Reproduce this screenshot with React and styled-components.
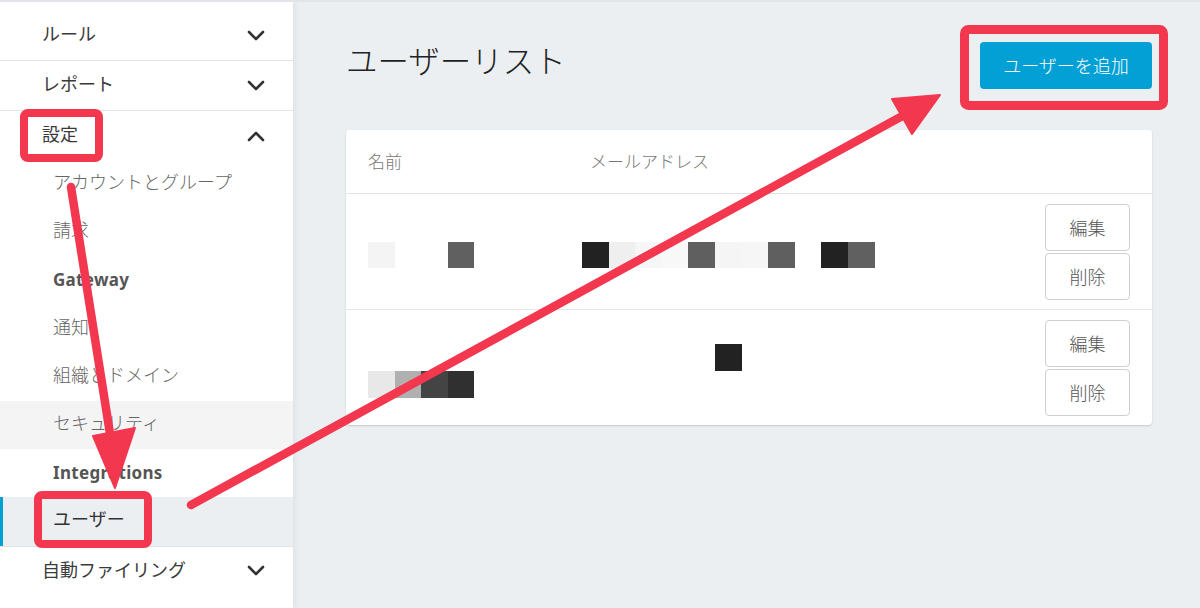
import React from "react";
import styled, { createGlobalStyle } from "styled-components";

const GlobalStyle = createGlobalStyle`
    html, body {
        margin: 0;
        padding: 0;
        font-family: "Noto Sans", "Noto Sans CJK JP", sans-serif;
    }
    * {
        box-sizing: border-box;
    }
`;

const RED = "#f2374e";
const BLUE = "#03a0d6";

const navGroups = [
    { label: "ルール", open: false, divided: true },
    { label: "レポート", open: false, divided: true },
    {
        label: "設定",
        open: true,
        divided: true,
        items: [
            { label: "アカウントとグループ" },
            { label: "請求" },
            { label: "Gateway", bold: true },
            { label: "通知" },
            { label: "組織とドメイン" },
            { label: "セキュリティ", hover: true },
            { label: "Integrations", bold: true },
            { label: "ユーザー", active: true },
        ],
    },
    { label: "自動ファイリング", open: false },
];

// ぼかし済みの名前/メール (モザイク)
const W = "transparent";
const users = [
    {
        name: [["#f4f4f4", W, W, "#606060"]],
        mail: [
            [
                "#222222",
                "#efefef",
                "#f6f6f6",
                "#f8f8f8",
                "#5f5f5f",
                "#f5f5f5",
                "#f6f6f6",
                "#5f5f5f",
                W,
                "#222222",
                "#606060",
            ],
        ],
    },
    {
        name: [
            [W, W, W, W],
            ["#e8e8e8", "#b0b0b0", "#444444", "#303030"],
        ],
        mail: [[W, W, W, W, W, "#222222"], [W]],
    },
];

const Chevron = ({ up }) => (
    <svg width="18" height="12" viewBox="0 0 18 12">
        <polyline
            points={up ? "2,10 9,3 16,10" : "2,2 9,9 16,2"}
            fill="none"
            stroke="#333"
            strokeWidth="2.6"
            strokeLinecap="round"
            strokeLinejoin="round"
        />
    </svg>
);

const Mosaic = ({ lines, shift }) => (
    <MosaicBox $shift={shift}>
        {lines.map((line, i) => (
            <MosaicLine key={i}>
                {line.map((c, j) => (
                    <MosaicCell key={j} style={{ background: c }} />
                ))}
            </MosaicLine>
        ))}
    </MosaicBox>
);

// 注釈 (赤枠と矢印)
const Annotations = () => (
    <Overlay viewBox="0 0 1200 608">
        <g fill="none" stroke={RED} strokeWidth="8">
            <rect x="24" y="113" width="75" height="45" rx="4" />
            <rect x="38" y="495" width="110" height="49" rx="4" />
            <rect x="964.5" y="29.5" width="199" height="76" rx="4" strokeWidth="9" />
        </g>
        <g stroke={RED} strokeWidth="8.5" strokeLinecap="round">
            <line x1="71" y1="187" x2="111" y2="440" />
            <line x1="191" y1="505" x2="906" y2="114" />
        </g>
        <g fill={RED} stroke={RED} strokeWidth="2" strokeLinejoin="round">
            <polygon points="93,436 135,428 115,488" />
            <polygon points="892,99 912,134 940,95" />
        </g>
    </Overlay>
);

const App = () => {
    return (
        <React.Fragment>
            <GlobalStyle />
            <Page>
                <Sidebar>
                    {navGroups.map(group => (
                        <NavGroup key={group.label} $divided={group.divided}>
                            <NavHeader>
                                <span>{group.label}</span>
                                <Chevron up={group.open} />
                            </NavHeader>
                            {group.items &&
                                group.items.map(item => (
                                    <SubItem
                                        key={item.label}
                                        $bold={item.bold}
                                        $hover={item.hover}
                                        $active={item.active}
                                    >
                                        {item.label}
                                    </SubItem>
                                ))}
                        </NavGroup>
                    ))}
                </Sidebar>
                <Main>
                    <Header>
                        <Title>ユーザーリスト</Title>
                        <PrimaryButton>ユーザーを追加</PrimaryButton>
                    </Header>
                    <Card>
                        <HeadRow>
                            <HeadCell>名前</HeadCell>
                            <HeadCell>メールアドレス</HeadCell>
                            <span />
                        </HeadRow>
                        {users.map((u, i) => (
                            <Row key={i} $last={i === users.length - 1}>
                                <Cell>
                                    <Mosaic lines={u.name} />
                                </Cell>
                                <Cell>
                                    <Mosaic lines={u.mail} shift={-8} />
                                </Cell>
                                <Actions>
                                    <ActionButton>編集</ActionButton>
                                    <ActionButton>削除</ActionButton>
                                </Actions>
                            </Row>
                        ))}
                    </Card>
                </Main>
                <Annotations />
            </Page>
        </React.Fragment>
    );
};

// ページ全体
const Page = styled.div`
    position: relative;
    display: flex;
    width: 1200px;
    height: 608px;
    overflow: hidden;
    background: #eceff2;
    border-top: 2px solid #e2e4e7;
`;
// 左メニュー
const Sidebar = styled.nav`
    width: 293px;
    flex-shrink: 0;
    padding-top: 9px;
    background: #fff;
    box-shadow: 2px 0 6px rgba(0, 0, 0, 0.06);
    z-index: 1;
`;
const NavGroup = styled.div`
    border-bottom: ${props => (props.$divided ? "1px solid #e3e3e3" : "none")};
`;
const NavHeader = styled.div`
    height: 49px;
    padding: 0 28px 5px 42px;
    display: flex;
    align-items: center;
    justify-content: space-between;
    font-family: "Noto Sans CJK JP", sans-serif;
    font-size: 18px;
    font-weight: 400;
    color: #3a3a3a;
    svg {
        margin-top: 5px;
    }
`;
const SubItem = styled.div`
    height: 48.2px;
    padding-left: ${props => (props.$active ? "50px" : "53px")};
    padding-bottom: ${props => (props.$bold ? "2px" : "6px")};
    display: flex;
    align-items: center;
    font-family: ${props =>
        props.$bold
            ? `"Noto Sans", sans-serif`
            : `"Noto Sans CJK JP", sans-serif`};
    font-size: ${props => (props.$bold ? "17px" : "18px")};
    font-weight: ${props => (props.$bold ? 700 : props.$active ? 400 : 300)};
    letter-spacing: ${props => (props.$bold ? "0.3px" : "0")};
    color: ${props => (props.$active ? "#333" : props.$bold ? "#555" : "#666")};
    background: ${props =>
        props.$active ? "#eceff2" : props.$hover ? "#f4f4f4" : "#fff"};
    border-left: ${props => (props.$active ? `3px solid ${BLUE}` : "none")};
`;
// メイン
const Main = styled.main`
    flex: 1;
    padding: 40px 48px 0 53px;
`;
const Header = styled.div`
    display: flex;
    align-items: center;
    justify-content: space-between;
    height: 47px;
`;
const Title = styled.h1`
    margin: 0 0 14px;
    font-family: "Noto Sans CJK JP", sans-serif;
    font-size: 31.5px;
    font-weight: 300;
    color: #222;
`;
const PrimaryButton = styled.button`
    width: 172px;
    height: 47px;
    padding-bottom: 3px;
    border: none;
    border-radius: 4px;
    background: ${BLUE};
    color: #fff;
    font-family: "Noto Sans CJK JP", sans-serif;
    font-size: 18px;
    font-weight: 300;
`;
const Card = styled.div`
    margin-top: 41px;
    background: #fff;
    border-radius: 4px;
    box-shadow: 0 1px 2px rgba(0, 0, 0, 0.16);
`;
const HeadRow = styled.div`
    display: grid;
    grid-template-columns: 222px 1fr 85px;
    align-items: center;
    height: 64px;
    padding: 0 22px 2px;
    border-bottom: 1px solid #e2e2e2;
`;
const HeadCell = styled.span`
    font-family: "Noto Sans CJK JP", sans-serif;
    font-size: 17px;
    font-weight: 300;
    color: #777;
`;
const Row = styled.div`
    display: grid;
    grid-template-columns: 222px 1fr 85px;
    align-items: center;
    padding: 10px 22px 9px;
    border-bottom: ${props => (props.$last ? "none" : "1px solid #e6e6e6")};
`;
const Cell = styled.div`
    padding-top: 6px;
`;
const MosaicBox = styled.div`
    display: flex;
    flex-direction: column;
    margin-left: ${props => props.$shift || 0}px;
`;
const MosaicLine = styled.div`
    display: flex;
    height: 26.6px;
`;
const MosaicCell = styled.span`
    width: 26.6px;
    height: 26.6px;
`;
const Actions = styled.div`
    display: flex;
    flex-direction: column;
    gap: 2px;
`;
const ActionButton = styled.button`
    width: 85px;
    height: 47px;
    padding-bottom: 3px;
    border: 1px solid #cfcfcf;
    border-radius: 4px;
    background: #fff;
    font-family: "Noto Sans CJK JP", sans-serif;
    font-size: 18px;
    font-weight: 300;
    color: #555;
`;
const Overlay = styled.svg`
    position: absolute;
    top: -2px;
    left: 0;
    width: 1200px;
    height: 608px;
    pointer-events: none;
    z-index: 5;
`;

export default App;
